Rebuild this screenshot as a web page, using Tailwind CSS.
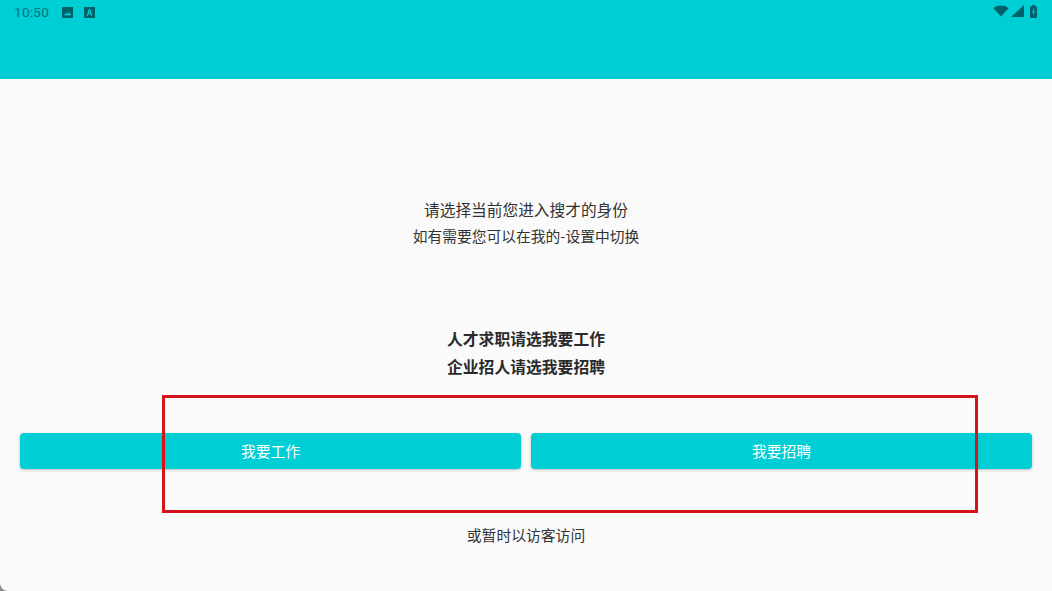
<!DOCTYPE html>
<html lang="zh">
<head>
  <meta charset="UTF-8" />
  <title>搜才</title>
  <script src="https://cdn.jsdelivr.net/npm/@tailwindcss/browser@4"></script>
</head>
<body class="relative w-[1052px] h-[591px] overflow-hidden bg-[#8a8a8a] font-['Noto_Sans_CJK_SC',sans-serif]">
  <div class="flex flex-col w-full h-full bg-[#fafafa] rounded-bl-[8px] overflow-hidden">

    <!-- App bar with status row -->
    <header class="h-[79px] shrink-0 bg-[#00ced5]">
      <div class="flex items-center justify-between h-[24px] pl-[14px] pr-[15px] text-[#00616a]">
        <div class="flex items-center">
          <span class="text-[13.500px] font-['Roboto',sans-serif] tracking-[0.3px] text-[#0a6f77]">10:50</span>
          <svg class="ml-[13px]" width="11" height="11" viewBox="1 1 10 10">
            <path fill="currentColor" fill-rule="evenodd" d="M1 1h10v10H1z M2.500 8.500h7L7.500 5.500 6 7.500 5 6.300z" />
          </svg>
          <svg class="ml-[11px]" width="11" height="11" viewBox="1 1 10 10">
            <path fill="currentColor" fill-rule="evenodd" d="M1.500 1h9a.5.5 0 0 1 .5.5v9a.5.5 0 0 1-.5.5h-9a.5.5 0 0 1-.5-.5v-9a.5.5 0 0 1 .5-.5z M5.300 3 3.400 9h1.200l.4-1.300h2L7.400 9h1.200L6.700 3z M6 4.600l.7 2.100H5.300z" />
          </svg>
        </div>
        <div class="flex items-center mb-[2px]">
          <svg width="16" height="12" viewBox="0 0 15 12"><path fill="currentColor" d="M0 3.200C2 1.200 4.600.5 7.500.5S13 1.200 15 3.200L7.500 11.500z" /></svg>
          <svg class="ml-[2px]" width="13" height="12" viewBox="0 0 13 12"><path fill="currentColor" d="M13 0v12H0z" /></svg>
          <svg class="ml-[6px]" width="7" height="13" viewBox="0 0 7 13">
            <path fill="currentColor" fill-rule="evenodd" d="M2.200 0h2.600v1.200H6a1 1 0 0 1 1 1V12a1 1 0 0 1-1 1H1a1 1 0 0 1-1-1V2.200a1 1 0 0 1 1-1h1.200z M4 3 2 7.300h1.300L3 10.500l2-4.300H3.700z" />
          </svg>
        </div>
      </div>
    </header>

    <!-- Content -->
    <main class="flex flex-col items-center flex-1 text-[#333333]">
      <div class="mt-[117px] text-center">
        <p class="text-[15.700px] leading-[27px]">请选择当前您进入搜才的身份</p>
        <p class="text-[14.750px] leading-[26px]">如有需要您可以在我的-设置中切换</p>
      </div>
      <div class="mt-[76px] text-[15.800px] leading-[28px] font-bold text-center text-[#2a2a2a]">
        <p>人才求职请选我要工作</p>
        <p>企业招人请选我要招聘</p>
      </div>
      <div class="flex gap-[10px] w-full mt-[52px] px-[20px]">
        <button class="flex-1 h-[36px] rounded-[4px] bg-[#00ced5] text-white text-[14.800px] shadow-[0_1px_3px_rgba(0,0,0,0.25)]">我要工作</button>
        <button class="flex-1 h-[36px] rounded-[4px] bg-[#00ced5] text-white text-[14.800px] shadow-[0_1px_3px_rgba(0,0,0,0.25)]">我要招聘</button>
      </div>
      <p class="mt-[54px] text-[14.800px] leading-[24px]">或暂时以访客访问</p>
    </main>
  </div>

  <!-- Red annotation frame over the screenshot -->
  <div class="absolute left-[162px] top-[395px] w-[816px] h-[118px] border-[3px] border-[#d3141a] pointer-events-none"></div>
</body>
</html>
